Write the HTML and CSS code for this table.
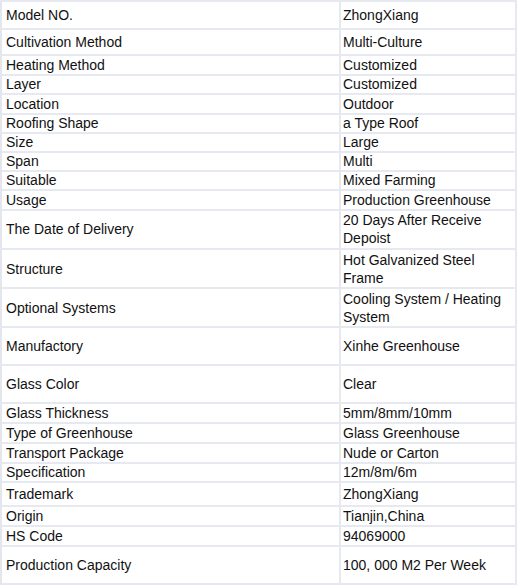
FILE: index.html
```html
<!DOCTYPE html>
<html>
<head>
<meta charset="utf-8">
<link rel="stylesheet" href="styles.css">
</head>
<body>
<div class="spec">
  <div class="row h28"><div class="k">Model NO.</div><div class="v">ZhongXiang</div></div>
  <div class="row h26"><div class="k">Cultivation Method</div><div class="v">Multi-Culture</div></div>
  <div class="row h19"><div class="k">Heating Method</div><div class="v">Customized</div></div>
  <div class="row h20"><div class="k">Layer</div><div class="v">Customized</div></div>
  <div class="row h19"><div class="k">Location</div><div class="v">Outdoor</div></div>
  <div class="row h19"><div class="k">Roofing Shape</div><div class="v">a Type Roof</div></div>
  <div class="row h19"><div class="k">Size</div><div class="v">Large</div></div>
  <div class="row h19"><div class="k">Span</div><div class="v">Multi</div></div>
  <div class="row h20"><div class="k">Suitable</div><div class="v">Mixed Farming</div></div>
  <div class="row h19"><div class="k">Usage</div><div class="v">Production Greenhouse</div></div>
  <div class="row h40"><div class="k">The Date of Delivery</div><div class="v">20 Days After Receive Depoist</div></div>
  <div class="row h39"><div class="k">Structure</div><div class="v">Hot Galvanized Steel Frame</div></div>
  <div class="row h39"><div class="k">Optional Systems</div><div class="v">Cooling System / Heating System</div></div>
  <div class="row h38"><div class="k">Manufactory</div><div class="v">Xinhe Greenhouse</div></div>
  <div class="row h38"><div class="k">Glass Color</div><div class="v">Clear</div></div>
  <div class="row h20"><div class="k">Glass Thickness</div><div class="v">5mm/8mm/10mm</div></div>
  <div class="row h20"><div class="k">Type of Greenhouse</div><div class="v">Glass Greenhouse</div></div>
  <div class="row h19"><div class="k">Transport Package</div><div class="v">Nude or Carton</div></div>
  <div class="row h19"><div class="k">Specification</div><div class="v">12m/8m/6m</div></div>
  <div class="row h25"><div class="k">Trademark</div><div class="v">ZhongXiang</div></div>
  <div class="row h20"><div class="k">Origin</div><div class="v">Tianjin,China</div></div>
  <div class="row h20"><div class="k">HS Code</div><div class="v">94069000</div></div>
  <div class="row h38"><div class="k">Production Capacity</div><div class="v">100, 000 M2 Per Week</div></div>
</div>
</body>
</html>
```
FILE: styles.css
```css
html, body {
  margin: 0;
  padding: 0;
  background: #ffffff;
}
.spec {
  width: 517px;
  box-sizing: border-box;
  border-top: 2px solid #e6e9f0;
  border-left: 2px solid #e3e6ec;
  font-family: "Liberation Sans", Arial, sans-serif;
  font-size: 14px;
  line-height: 18px;
  color: #111111;
}
.row {
  display: grid;
  grid-template-columns: 339px 176px;
}
.k, .v {
  box-sizing: border-box;
  border-right: 2px solid #e6e9f0;
  border-bottom: 2px solid #e6e9f0;
  display: flex;
  align-items: center;
}
.k { padding-left: 4px; }
.v { padding-left: 2px; padding-right: 6px; }
.h19 { height: 19px; }
.h20 { height: 20px; }
.h25 { height: 25px; }
.h26 { height: 26px; }
.h28 { height: 28px; }
.h38 { height: 38px; }
.h39 { height: 39px; }
.h40 { height: 40px; }
```
